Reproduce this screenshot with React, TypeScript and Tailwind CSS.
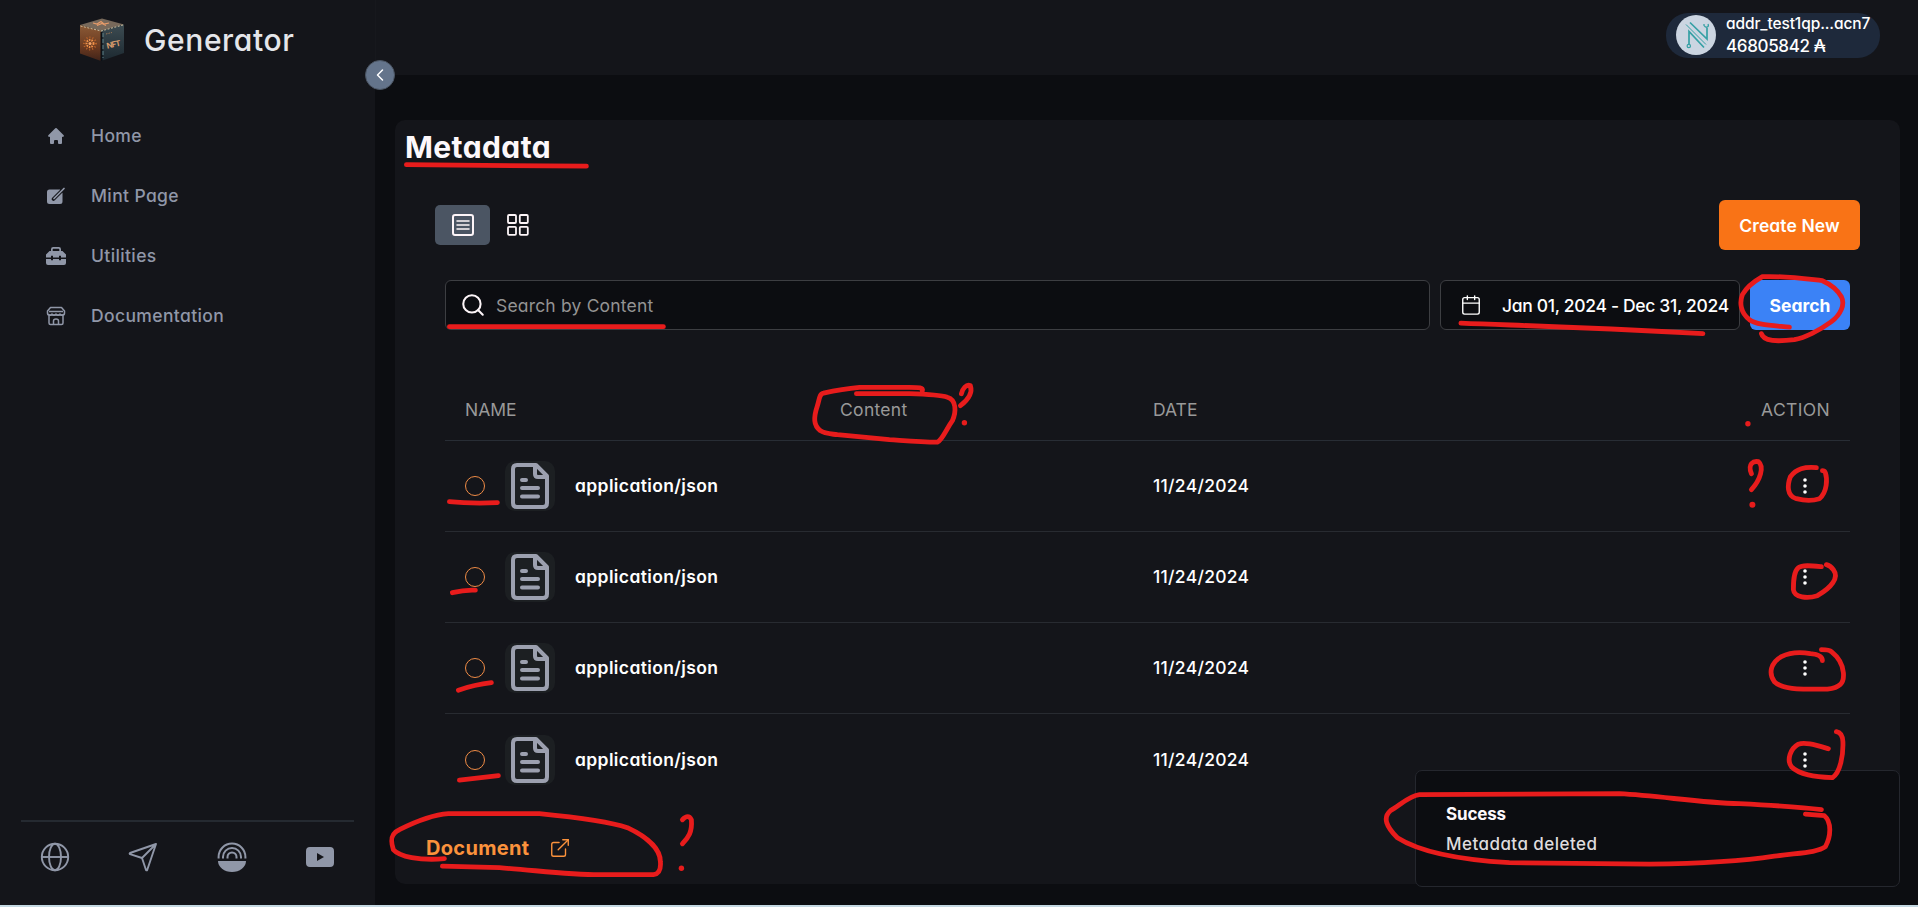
import React from "react";
import { Search, Calendar, ChevronLeft, ExternalLink } from "lucide-react";

const red = "#e81c1c";

const strokes = [
  "M407 165L587 166.500",
  "M450 327L664 327",
  "M1461.500 323.500C1520 326 1560 326 1703.500 334",
  "M1790 327.500C1770 325.500 1757 325 1750 320C1741 313 1740 303 1743 295C1748 286 1756 281 1763 277C1785 276 1805 279 1823 281C1832 285 1838 290 1842 297C1846 305 1841 315 1832 322C1820 331 1805 338 1795 340C1778 342 1764 342 1762 334",
  "M923 391C924 388 920 387.700 910 387.700L860 387.700C845 389 835 391 824 393.500C820 394 820 400 818 406C814 418 814 426 821 431C825 434 830 434 838 435L890 440C905 441 920 442.500 938 442.500C943 440 946 431 953 421C957 412 957 400 948 397.500C940 395 925 394.500 910 394L857 394",
  "M962 394C963 389 967 384 971 386C973 392 970 399 961 406",
  "M1752 474C1748 464 1754 461 1759 462C1765 467 1761 480 1752 490",
  "M1817 468C1805 467 1797 469 1791 477C1788 485 1787 496 1797 499C1805 501 1814 501 1820 499C1828 492 1828 479 1826 473Q1825 471 1823 471",
  "M1822 567C1812 566 1803 565 1799 568C1794 572 1794 583 1794 590C1795 598 1808 599 1818 596C1832 588 1840 578 1834 570Q1831 566 1827 565",
  "M1823 661Q1823 655 1811 654C1800 652 1790 653 1782 657C1771 663 1769 674 1775 682C1783 690 1800 689.500 1828 689.500C1840 688 1845 684 1844 673C1843 662 1837 656 1832 652Q1830 650 1822 650",
  "M1829 749C1815 745 1805 742 1799 744.500C1791 749 1787 760 1792 767C1800 775 1815 777 1833 778C1841 773 1844 755 1843.500 742Q1843 733 1837 732",
  "M450 502Q470 504 498 503",
  "M453 593Q465 590 476 590.500",
  "M459 690.500Q475 685 492 683",
  "M460 780.500Q490 777 499 776",
  "M445 859C420 861 400 857 394 850C391 841 391 834 400 830C418 821 435 815 449 814L540 814C570 817 610 822 628 828C645 836 661 848 661 862Q662 874 654 875L600 875C570 875 540 871 500 868L443 866.500",
  "M683 820Q689 814 692 820C693 832 689 838 683 844",
  "M1822 810C1800 807 1780 806 1740 804C1700 803 1660 796 1620 794L1420 795C1410 796 1400 806 1391 811C1383 818 1387 827 1398 838C1420 852 1460 860 1510 863L1650 864.500C1700 864 1740 862 1775 856.500C1800 853 1818 853 1826 847C1832 836 1832 822 1825 816L1806 814.500",
];

function Annotations() {
  return (
    <svg className="pointer-events-none absolute inset-0 z-20" width="1918" height="907" fill="none" stroke={red} strokeWidth="4.800" strokeLinecap="round" strokeLinejoin="round">
      <g transform="translate(-.6 -.3)">
        {strokes.map((d) => <path key={d} d={d} />)}
        <g fill={red} stroke="none">
          <circle cx="965" cy="423" r="2.700" />
          <circle cx="1748.500" cy="424" r="2.700" />
          <circle cx="1753" cy="505" r="3" />
          <circle cx="682" cy="868.500" r="2.700" />
        </g>
      </g>
    </svg>
  );
}

function Cube() {
  return (
    <svg width="46" height="44" viewBox="0 0 46 44">
      <defs>
        <linearGradient id="cubeLeft" x1="0" y1="0" x2="0" y2="1"><stop offset="0" stopColor="#8a5a36" /><stop offset=".6" stopColor="#6b3a20" /><stop offset="1" stopColor="#40231a" /></linearGradient>
        <linearGradient id="cubeRight" x1="0" y1="0" x2="0" y2="1"><stop offset="0" stopColor="#3d4c52" /><stop offset="1" stopColor="#1c2830" /></linearGradient>
      </defs>
      <path d="M1 7L23 .500L45 6.500L22 13Z" fill="#77695b" />
      <path d="M1 7L22 13V43L1 35.500Z" fill="url(#cubeLeft)" />
      <path d="M22 13L45 6.500V35L22 43Z" fill="url(#cubeRight)" />
      <path d="M1.500 8L22 13L44 7" fill="none" stroke="#d6c8a8" strokeDasharray="2 1.500" strokeWidth=".9" />
      <path d="M22.500 14V43" stroke="#0b1016" strokeWidth="2" />
      <path d="M24 15V40" stroke="#6d979f" strokeWidth=".8" strokeDasharray="4 2" />
      <path d="M14 5l4 1 4-2.500 3 2.500 5-1M18 7.500l5-2 4 2" fill="none" stroke="#e79c6a" strokeWidth="1.200" />
      <circle cx="11" cy="25.500" r="6" fill="none" stroke="#b8622a" strokeWidth="2" strokeDasharray="1 2" />
      <circle cx="11" cy="25.500" r="3.500" fill="none" stroke="#f0914a" strokeWidth="2" strokeDasharray="1.500 1" />
      <circle cx="11" cy="25.500" r="1.500" fill="#f5a468" />
      <path d="M27 16l6-1.500" stroke="#9a7454" strokeDasharray="1.500 1" />
      <text x="28" y="30.500" fontFamily="Inter" fontWeight="700" fontSize="8" letterSpacing="-.8" fill="#d79b6c" transform="rotate(-13 29 30)">NFT</text>
    </svg>
  );
}

const HomeIcon = () => (
  <svg width="20" height="20" viewBox="0 0 20 20" fill="currentColor">
    <path d="M10.700 2.300a1 1 0 00-1.400 0l-7 7a1 1 0 001.400 1.400L4 10.400V17a1 1 0 001 1h2a1 1 0 001-1v-2a1 1 0 011-1h2a1 1 0 011 1v2a1 1 0 001 1h2a1 1 0 001-1v-6.600l.3.300a1 1 0 001.400-1.400l-7-7z" />
  </svg>
);
const MintIcon = () => (
  <svg width="20" height="20" viewBox="0 0 20 20" fill="none">
    <path d="M3.500 3.500H14L16.500 7v8.500A2.500 2.500 0 0114 18H3.500A2.500 2.500 0 011 15.500V6a2.500 2.500 0 012.500-2.500z" fill="currentColor" />
    <path d="M19 1.500L9 11.500l-1.500 1.500" stroke="#14151a" strokeWidth="3.600" strokeLinecap="round" />
    <path d="M18 2.500L9.500 11L8 12.500" stroke="currentColor" strokeWidth="1.700" strokeLinecap="round" />
  </svg>
);
const ToolboxIcon = () => (
  <svg width="20" height="20" viewBox="0 0 20 20" fill="currentColor">
    <path d="M5 5V3.200Q5 1 7.200 1h5.600Q15 1 15 3.200V5h1.500L20 8.500v3h-5V9.700h-2v1.800H7V9.700H5v1.800H0v-3L3.500 5zm1.700 0h6.600V3.300q0-.6-.6-.6H7.300q-.6 0-.6.6zM0 13h5v1.300h2V13h6v1.300h2V13h5v4q0 2-2 2H2q-2 0-2-2z" />
  </svg>
);
const StoreIcon = () => (
  <svg width="20" height="20" viewBox="0 0 20 20" fill="none" stroke="currentColor" strokeWidth="1.500" strokeLinejoin="round">
    <path d="M4.500 1.500h11L18.500 5v2.500q0 1.500-1.500 1.500H3q-1.500 0-1.500-1.500V5zM3 5.500h14M3 9v8q0 1.500 1.500 1.500h11Q17 18.500 17 17V9M7.500 18.500V15q0-2 2.500-2t2.500 2v3.500" />
    <path d="M2 8q2 2.500 4 0 2 2.500 4 0 2 2.500 4 0 2 2.500 4 0" />
  </svg>
);

const nav = [
  { label: "Home", Icon: HomeIcon },
  { label: "Mint Page", Icon: MintIcon },
  { label: "Utilities", Icon: ToolboxIcon },
  { label: "Documentation", Icon: StoreIcon },
];

function Sidebar() {
  return (
    <aside className="flex h-full w-[375px] shrink-0 flex-col bg-[#14151a]">
      <div className="flex h-[75px] items-center pl-[79px] pt-[5px]">
        <Cube />
        <span className="ml-[19px] text-[30px] font-medium tracking-[0.6px] text-[#e5e6ea]">Generator</span>
      </div>
      <nav className="mt-[31px] flex flex-col text-[#9097a8]">
        {nav.map(({ label, Icon }) => (
          <div key={label} className="flex h-[60px] items-center gap-[25px] pl-[46px]">
            <Icon />
            <span className="text-[17.5px] font-medium tracking-[0.38px]">{label}</span>
          </div>
        ))}
      </nav>
      <div className="mx-[21px] mt-auto h-[85px] border-t-2 border-[#252a31] pt-[20px] text-[#9097a8]">
        <div className="flex justify-between pl-[19px] pr-[19px]">
          <svg width="30" height="30" viewBox="0 0 30 30" fill="none" stroke="currentColor" strokeWidth="1.900">
            <circle cx="15" cy="15" r="13.200" /><ellipse cx="15" cy="15" rx="6" ry="13.200" /><path d="M2 15h26" />
          </svg>
          <svg width="30" height="30" viewBox="0 0 30 30" fill="none" stroke="currentColor" strokeWidth="1.900" strokeLinejoin="round">
            <path d="M28 2L2 11q-.8.600 0 1.200L14 16l4 12q.800.800 1.200 0zM14 16L28 2" />
          </svg>
          <svg width="30" height="30" viewBox="0 0 30 30">
            <g fill="none" stroke="currentColor" strokeWidth="2"><path d="M1.600 16.500V15a13.400 13.400 0 0126.800 0v1.500M6 16.500V15a9 9 0 0118 0v1.500M10.500 16.500V15a4.500 4.500 0 019 0v1.500" /></g>
            <path d="M1 19h28a14 11 0 01-28 0z" fill="currentColor" />
          </svg>
          <svg width="30" height="30" viewBox="0 0 30 30">
            <path d="M5 5h20q4 0 4 4v12q0 4-4 4H5q-4 0-4-4V9q0-4 4-4zM12 11v8l7-4z" fill="currentColor" fillRule="evenodd" />
          </svg>
        </div>
      </div>
    </aside>
  );
}

function FileIcon() {
  return (
    <svg width="50" height="50" viewBox="0 0 50 50" fill="none" stroke="#9ca0af" strokeWidth="4" strokeLinecap="round" strokeLinejoin="round">
      <path d="M31 4H12q-4 0-4 4v34q0 4 4 4h26q4 0 4-4V15zM30 4v9q0 3 3 3h9M17 19h4M17 27h16M17 35.500h16" />
    </svg>
  );
}

function Row({ last }: { last: boolean }) {
  return (
    <div className={`flex h-[91px] items-center pl-5 ${last ? "" : "border-b border-[#282b31]"}`}>
      <span className="size-5 rounded-full border border-[#f08c46]" />
      <span className="ml-5 size-[50px] rounded-[10px] bg-[#1c1f22]"><FileIcon /></span>
      <span className="ml-5 w-[578px] text-[17.5px] font-semibold tracking-[0.38px] text-white">application/json</span>
      <span className="text-[17.5px] font-medium tracking-[0.28px] text-white">11/24/2024</span>
      <svg className="ml-auto mr-[43px]" width="4" height="16" viewBox="0 0 4 16" fill="#fff">
        <circle cx="2" cy="2" r="1.800" /><circle cx="2" cy="8" r="1.800" /><circle cx="2" cy="14" r="1.800" />
      </svg>
    </div>
  );
}

export default function App() {
  return (
    <div className="relative flex h-[907px] w-[1918px] flex-col overflow-hidden bg-[#0c0d11] font-['Inter',sans-serif] leading-none whitespace-nowrap [font-feature-settings:'cv11']">
      <div className="flex h-[905px] shrink-0">
        <Sidebar />
        <div className="flex min-w-0 flex-1 flex-col">
          <header className="flex h-[75px] shrink-0 items-start justify-end border-l border-[#17181d] bg-[#14151a] pr-[38px] pt-[13px]">
            <div className="flex h-[45px] w-[214px] items-center rounded-[22px] bg-[#1e293b] pl-[10px] text-white">
              <svg className="-mt-px" width="40" height="40" viewBox="0 0 40 40" fill="none" stroke="#35a0a4">
                <circle cx="20" cy="20" r="20" fill="#cbd5e1" stroke="none" />
                <path d="M13 29V16.500L28 32.500M14 7.500L31 24V13" strokeWidth="1.700" />
                <path d="M10 9.500L30 29.500" strokeWidth="1" />
                <circle cx="12.800" cy="31" r="1.700" strokeWidth="1.200" />
                <path d="M28 9v1.500q1.500 2.500 3.500 1.500 1.500-1 .5-3" strokeWidth="1.300" />
              </svg>
              <div className="ml-[10px] flex flex-col gap-[6px]">
                <span className="text-[15.5px] font-medium tracking-[-0.1px]">addr_test1qp...acn7</span>
                <span className="text-[17px] font-medium tracking-[-0.35px]">46805842 ₳</span>
              </div>
            </div>
          </header>
          <main className="ml-5 mr-[18px] mt-[45px] flex h-[764px] flex-col rounded-[10px] bg-[#14151a]">
            <h1 className="pl-[10px] pt-[12px] text-[30px] font-bold tracking-[0.4px] text-[#fdf8fb]">Metadata</h1>
            <div className="mx-10 mt-[38px] flex h-[50px] items-center">
              <div className="flex h-10 w-[55px] items-center justify-center rounded-[5px] bg-[#4b5563]">
                <svg width="22" height="22" viewBox="0 0 22 22" fill="none" stroke="#fdf5f8" strokeWidth="2" strokeLinecap="round">
                  <rect x="1" y="1" width="20" height="20" rx="2" /><path d="M5 7h12M5 11h12M5 15h12" strokeWidth="1.500" />
                </svg>
              </div>
              <svg className="ml-[17px]" width="22" height="22" viewBox="0 0 22 22" fill="none" stroke="#fdf5f8" strokeWidth="1.800">
                <rect x="1" y="1" width="8" height="8" rx="1" /><rect x="12.800" y="1" width="8" height="8" rx="1" />
                <rect x="1" y="12.800" width="8" height="8" rx="1" /><rect x="12.800" y="12.800" width="8" height="8" rx="1" />
              </svg>
              <button className="ml-auto h-[50px] w-[141px] rounded-[6px] bg-[#f97316] pt-px text-[17.5px] font-semibold tracking-[0.1px] text-white">Create New</button>
            </div>
            <div className="mx-[50px] mt-[30px] flex h-[50px] gap-[10px]">
              <div className="flex w-[985px] items-center rounded-[6px] border border-[#3d3e42] bg-[#0c0d11] pl-[14px]">
                <Search size={26} strokeWidth={1.9} className="text-[#fdf5f8]" />
                <span className="ml-[10px] pt-[2px] text-[17.5px] tracking-[0.18px] text-[#939393]">Search by Content</span>
              </div>
              <div className="flex w-[300px] items-center rounded-[6px] border border-[#3d3e42] bg-[#0c0d11] pl-[19px] text-white">
                <Calendar size={22} strokeWidth={1.5} />
                <span className="ml-5 pt-[2px] text-[17.5px] font-medium tracking-[-0.33px]">Jan 01, 2024 - Dec 31, 2024</span>
              </div>
              <button className="w-[100px] rounded-[6px] bg-[#3b82f6] pt-[2px] text-[17.5px] font-bold text-white">Search</button>
            </div>
            <div className="mx-[50px] mt-[50px] flex h-[61px] items-center border-b border-[#282d35] pl-5 text-[17.5px] text-[#999]">
              <span className="w-[375px]">NAME</span>
              <span className="w-[313px] tracking-[0.3px]">Content</span>
              <span>DATE</span>
              <span className="ml-auto mr-5 tracking-[0.35px]">ACTION</span>
            </div>
            <div className="mx-[50px] flex flex-col">
              {[0, 1, 2, 3].map((i) => <Row key={i} last={i === 3} />)}
            </div>
            <div className="ml-[31px] mt-[32px] flex items-center gap-[20px] text-[#fb923c]">
              <span className="text-[20px] font-bold tracking-[0.3px]">Document</span>
              <ExternalLink size={22} strokeWidth={1.5} />
            </div>
          </main>
        </div>
      </div>
      <div className="h-[2px] bg-[#c4d8e2]" />
      <div className="absolute left-[365px] top-[60px] z-10 flex size-[30px] items-center justify-center rounded-full border border-[#4b5563] bg-[#64748b] text-white">
        <ChevronLeft size={20} strokeWidth={1.8} />
      </div>
      <div className="absolute left-[1415px] top-[770px] z-10 flex h-[117px] w-[485px] flex-col gap-[13px] rounded-[7px] border border-[#25272e] bg-[#0c0d11] pl-[30px] pt-[35px] text-[17px]">
        <span className="font-bold tracking-[-0.15px] text-[#fdf8fb]">Sucess</span>
        <span className="font-medium tracking-[0.45px] text-[#dfdcde]">Metadata deleted</span>
      </div>
      <Annotations />
    </div>
  );
}
